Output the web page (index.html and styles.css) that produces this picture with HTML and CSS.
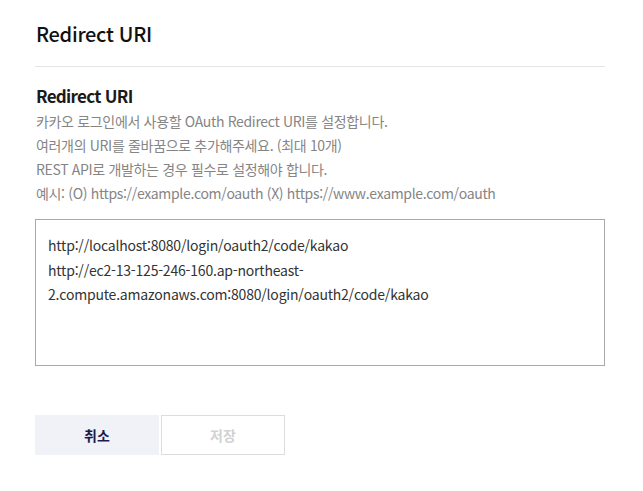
FILE: index.html
```html
<!DOCTYPE html>
<html lang="ko">
<head>
    <meta charset="UTF-8">
    <meta name="viewport" content="width=device-width, initial-scale=1.0">
    <title>Redirect URI</title>
    <link rel="stylesheet" href="styles.css">
</head>
<body>
    <div class="container">
        <h1 class="page-title">Redirect URI</h1>

        <div class="section">
            <h2>Redirect URI</h2>
            <p class="desc">카카오 로그인에서 사용할 OAuth Redirect URI를 설정합니다.</p>
            <p class="desc">여러개의 URI를 줄바꿈으로 추가해주세요. (최대 10개)</p>
            <p class="desc">REST API로 개발하는 경우 필수로 설정해야 합니다.</p>
            <p class="desc">예시: (O) https://example.com/oauth (X) https://www.example.com/oauth</p>

            <textarea id="redirectUris" class="uri-box">http://localhost:8080/login/oauth2/code/kakao
http://ec2-13-125-246-160.ap-northeast-2.compute.amazonaws.com:8080/login/oauth2/code/kakao</textarea>
        </div>

        <div class="buttons">
            <button type="button" class="btn btn-cancel">취소</button>
            <button type="button" class="btn btn-save" disabled>저장</button>
        </div>
    </div>
</body>
</html>
```

FILE: styles.css
```css
* {
    box-sizing: border-box;
}

body {
    font-family: "Noto Sans CJK KR", "Noto Sans", sans-serif;
    background-color: #fff;
    color: #222;
    margin: 0;
    padding: 0;
}

.container {
    padding: 0 38px 0 35px;
}

.page-title {
    margin: 0;
    padding: 20px 1px 18px;
    font-size: 20px;
    line-height: 28px;
    font-weight: 500;
    letter-spacing: -0.3px;
    color: #111;
    border-bottom: 1px solid #e5e5e5;
}

.section {
    padding-top: 17px;
}

.section h2 {
    margin: 0 0 1px 1px;
    font-size: 17px;
    line-height: 24px;
    font-weight: 700;
    letter-spacing: -0.7px;
    color: #1a1a1a;
}

.desc {
    margin: 0 0 0 1px;
    font-size: 14px;
    line-height: 24px;
    letter-spacing: -0.33px;
    color: #858585;
}

.uri-box {
    display: block;
    width: 100%;
    height: 147px;
    margin-top: 14px;
    padding: 13px 12px 12px;
    border: 1px solid #aaa;
    border-radius: 0;
    font-family: inherit;
    font-size: 14px;
    line-height: 24.5px;
    letter-spacing: -0.2px;
    color: #333;
    resize: none;
    outline: none;
}

.buttons {
    display: flex;
    gap: 2px;
    margin-top: 49px;
}

.btn {
    width: 124px;
    height: 40px;
    font-family: inherit;
    font-size: 14px;
    font-weight: 700;
    border-radius: 0;
    cursor: pointer;
}

.btn-cancel {
    background-color: #f0f2f8;
    border: none;
    color: #1c1c4a;
}

.btn-save {
    background-color: #fff;
    border: 1px solid #ddd;
    color: #d2d2d2;
    cursor: default;
}
```
